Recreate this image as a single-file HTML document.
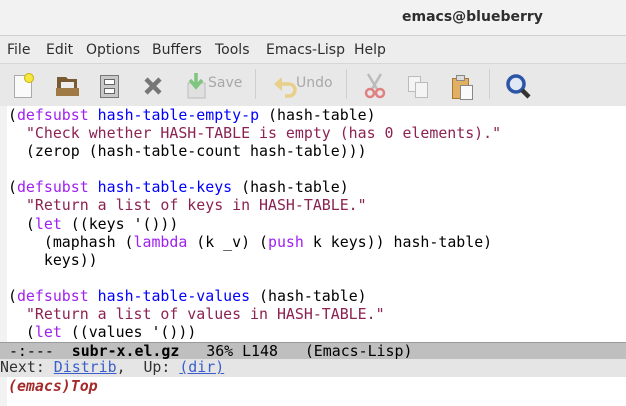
<!DOCTYPE html>
<html><head><style>
*{margin:0;padding:0;box-sizing:border-box}
body{width:626px;height:406px;overflow:hidden;background:#fff;font-family:"Liberation Sans","DejaVu Sans",sans-serif;position:relative}
#title{position:absolute;left:0;top:0;width:626px;height:36px;background:#f2f2f2;border-bottom:1px solid #cfcfcf}
#title span{position:absolute;left:402px;top:9px;font-size:14px;font-weight:bold;color:#2e2e2e;font-family:"DejaVu Sans",sans-serif}
#menu{position:absolute;left:0;top:36px;width:626px;height:28px;background:#ededed;border-bottom:1px solid #d6d6d6;font-family:"DejaVu Sans",sans-serif;font-size:14px;color:#2e2e2e}
#menu span{position:absolute;top:6px}
#tool{position:absolute;left:0;top:64px;width:626px;height:42px;background:#e8e8e8}
.sep{position:absolute;top:5px;width:1px;height:30px;background:#cfcfcf}
.tl{position:absolute;top:11px;font-size:14px;color:#a8a8a8;font-family:"DejaVu Sans",sans-serif}
#fringe{position:absolute;left:0;top:106px;width:7px;height:300px;background:#f2f2f2}
pre{position:absolute;left:8px;top:106px;font-family:"DejaVu Sans Mono",monospace;font-size:14.9px;line-height:18.1px;color:#000}
.k{color:#a020f0}.f{color:#0000ff}.s{color:#8b2252}
#mode{position:absolute;left:0;top:342px;width:626px;height:17px;background:#bfbfbf;border-top:1px solid #9a9a9a;font-family:"DejaVu Sans Mono",monospace;font-size:14.9px;line-height:16px;white-space:pre;color:#000}
#hdr{position:absolute;left:0;top:359px;width:626px;height:18px;background:#e5e5e5;font-family:"DejaVu Sans Mono",monospace;font-size:14.9px;line-height:17px;white-space:pre;color:#333}
#hdr a{color:#3a5fcd;text-decoration:underline}
#echo{position:absolute;left:8px;top:377px;font-family:"DejaVu Sans Mono",monospace;font-size:14.9px;font-style:italic;font-weight:bold;color:#a52a2a}
</style></head><body>
<div id="title"><span>emacs@blueberry</span></div>
<div id="menu"><span style="left:7px">File</span><span style="left:46px">Edit</span><span style="left:86px">Options</span><span style="left:152px">Buffers</span><span style="left:215px">Tools</span><span style="left:266px">Emacs-Lisp</span><span style="left:354px">Help</span></div>
<div id="tool">
<svg width="626" height="42" style="position:absolute;left:0;top:0">
<rect x="14.5" y="11.5" width="17" height="22" fill="#fafafa" stroke="#aaa"/><circle cx="29" cy="14" r="4.5" fill="#f5e642" stroke="#c9b400"/>
<path d="M57 13h9l2 2h9v15h-20z" fill="#7a5a33"/><rect x="61" y="18" width="13" height="9" fill="#eee"/><rect x="56" y="24" width="23" height="8" fill="#a07a45"/>
<rect x="100.5" y="11.5" width="18" height="22" fill="#c8c8c8" stroke="#777"/><rect x="104.5" y="15.5" width="10" height="5" fill="#fff" stroke="#666"/><rect x="104.5" y="24.5" width="10" height="5" fill="#fff" stroke="#666"/>
<path d="M146 15l14 14M160 15l-14 14" stroke="#777" stroke-width="4.5"/>
<rect x="188" y="19" width="17" height="15" fill="#e0e0e0" stroke="#bbb"/><path d="M196 9v13M190 16l6 7 6-7" stroke="#7fc47f" stroke-width="3.5" fill="none"/>
<path d="M280 20h9a6 6 0 0 1 0 12h-4" stroke="#e8d08a" stroke-width="3.5" fill="none"/><path d="M282 13l-8 7 8 7z" fill="#e8d08a"/>
<path d="M368 10l9 15M381 10l-9 15" stroke="#bbb" stroke-width="2.5"/><circle cx="370" cy="29" r="4" fill="none" stroke="#e08080" stroke-width="2.5"/><circle cx="380" cy="29" r="4" fill="none" stroke="#e08080" stroke-width="2.5"/>
<rect x="408.5" y="12.5" width="12" height="15" fill="#f4f4f4" stroke="#bbb"/><rect x="415.5" y="18.5" width="12" height="15" fill="#f4f4f4" stroke="#bbb"/>
<rect x="452.5" y="14.5" width="16" height="20" fill="#e2b062" stroke="#a87a30"/><rect x="456.5" y="11.5" width="8" height="5" fill="#ddd" stroke="#888"/><rect x="460.5" y="21.5" width="12" height="14" fill="#fafafa" stroke="#888"/>
<circle cx="516" cy="20" r="8" fill="#dfe8f5" stroke="#2c55a8" stroke-width="3.5"/><path d="M522 26l7 7" stroke="#333" stroke-width="4.5"/>
</svg>
<span class="tl" style="left:208px">Save</span>
<div class="sep" style="left:255px"></div>
<span class="tl" style="left:296px">Undo</span>
<div class="sep" style="left:346px"></div>
<div class="sep" style="left:489px"></div>
</div>
<div id="fringe"></div>
<pre>(<span class="k">defsubst</span> <span class="f">hash-table-empty-p</span> (hash-table)
  <span class="s">"Check whether HASH-TABLE is empty (has 0 elements)."</span>
  (zerop (hash-table-count hash-table)))

(<span class="k">defsubst</span> <span class="f">hash-table-keys</span> (hash-table)
  <span class="s">"Return a list of keys in HASH-TABLE."</span>
  (<span class="k">let</span> ((keys '()))
    (maphash (<span class="k">lambda</span> (k _v) (<span class="k">push</span> k keys)) hash-table)
    keys))

(<span class="k">defsubst</span> <span class="f">hash-table-values</span> (hash-table)
  <span class="s">"Return a list of values in HASH-TABLE."</span>
  (<span class="k">let</span> ((values '()))</pre>
<div id="mode"> -:---  <b>subr-x.el.gz</b>   36% L148   (Emacs-Lisp)</div>
<div id="hdr">Next: <a>Distrib</a>,  Up: <a>(dir)</a></div>
<div id="echo">(emacs)Top</div>
</body></html>
